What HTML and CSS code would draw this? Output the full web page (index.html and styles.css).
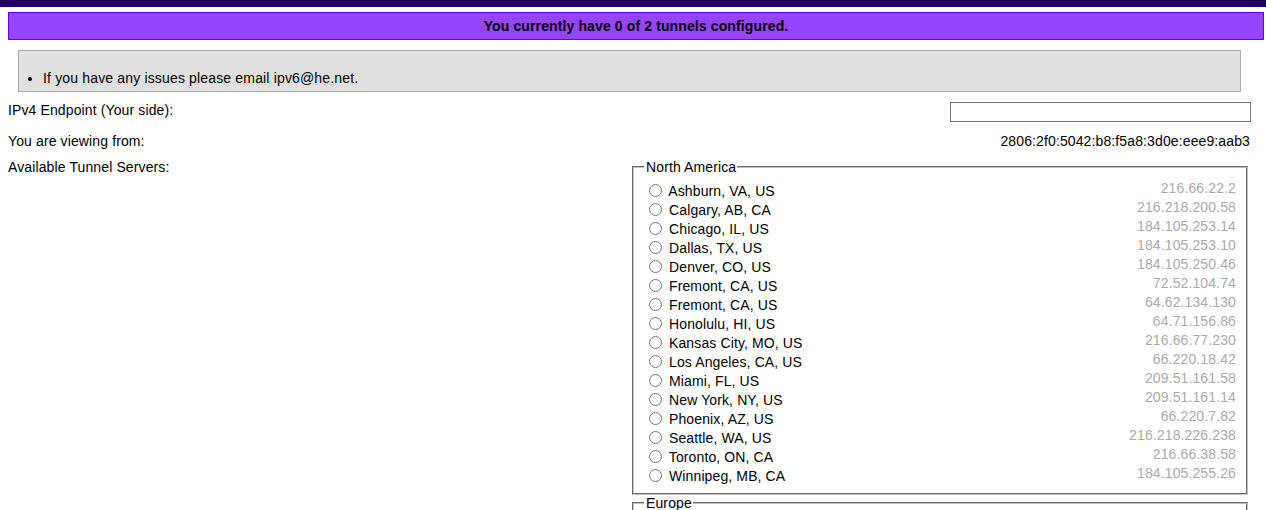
FILE: index.html
```html
<!DOCTYPE html>
<html>
<head>
<meta charset="utf-8">
<title>Create Regular Tunnel</title>
<link rel="stylesheet" href="styles.css">
</head>
<body>
<div class="topbar"></div>
<div class="banner">You currently have 0 of 2 tunnels configured.</div>
<div class="notice">
  <ul>
    <li>If you have any issues please email ipv6@he.net.</li>
  </ul>
</div>
<div class="main">
  <div class="row row-endpoint">
    <span class="label">IPv4 Endpoint (Your side):</span>
    <input class="endpoint" type="text">
  </div>
  <div class="row row-from">
    <span class="label">You are viewing from:</span>
    <span class="value">2806:2f0:5042:b8:f5a8:3d0e:eee9:aab3</span>
  </div>
  <div class="row row-servers">
    <span class="label">Available Tunnel Servers:</span>
    <div class="servers">
      <fieldset class="region">
        <legend>North America</legend>
        <div class="srv"><label><input type="radio" name="srv"> Ashburn, VA, US</label><span class="ip">216.66.22.2</span></div>
        <div class="srv"><label><input type="radio" name="srv"> Calgary, AB, CA</label><span class="ip">216.218.200.58</span></div>
        <div class="srv"><label><input type="radio" name="srv"> Chicago, IL, US</label><span class="ip">184.105.253.14</span></div>
        <div class="srv"><label><input type="radio" name="srv"> Dallas, TX, US</label><span class="ip">184.105.253.10</span></div>
        <div class="srv"><label><input type="radio" name="srv"> Denver, CO, US</label><span class="ip">184.105.250.46</span></div>
        <div class="srv"><label><input type="radio" name="srv"> Fremont, CA, US</label><span class="ip">72.52.104.74</span></div>
        <div class="srv"><label><input type="radio" name="srv"> Fremont, CA, US</label><span class="ip">64.62.134.130</span></div>
        <div class="srv"><label><input type="radio" name="srv"> Honolulu, HI, US</label><span class="ip">64.71.156.86</span></div>
        <div class="srv"><label><input type="radio" name="srv"> Kansas City, MO, US</label><span class="ip">216.66.77.230</span></div>
        <div class="srv"><label><input type="radio" name="srv"> Los Angeles, CA, US</label><span class="ip">66.220.18.42</span></div>
        <div class="srv"><label><input type="radio" name="srv"> Miami, FL, US</label><span class="ip">209.51.161.58</span></div>
        <div class="srv"><label><input type="radio" name="srv"> New York, NY, US</label><span class="ip">209.51.161.14</span></div>
        <div class="srv"><label><input type="radio" name="srv"> Phoenix, AZ, US</label><span class="ip">66.220.7.82</span></div>
        <div class="srv"><label><input type="radio" name="srv"> Seattle, WA, US</label><span class="ip">216.218.226.238</span></div>
        <div class="srv"><label><input type="radio" name="srv"> Toronto, ON, CA</label><span class="ip">216.66.38.58</span></div>
        <div class="srv"><label><input type="radio" name="srv"> Winnipeg, MB, CA</label><span class="ip">184.105.255.26</span></div>
      </fieldset>
      <fieldset class="region">
        <legend>Europe</legend>
        <div class="srv"><label><input type="radio" name="srv"> Amsterdam, NL</label><span class="ip">216.66.84.46</span></div>
        <div class="srv"><label><input type="radio" name="srv"> Berlin, DE</label><span class="ip">216.66.86.114</span></div>
        <div class="srv"><label><input type="radio" name="srv"> Budapest, HU</label><span class="ip">216.66.87.14</span></div>
      </fieldset>
    </div>
  </div>
</div>
</body>
</html>
```
FILE: styles.css
```css
html, body {
  margin: 0;
  padding: 0;
  background: #ffffff;
}
body {
  font-family: "Liberation Sans", Arial, sans-serif;
  font-size: 14px;
  letter-spacing: 0.12px;
  color: #000000;
  line-height: 16px;
}
.topbar {
  height: 7px;
  background: #1f0066;
}
.banner {
  margin: 5px 2px 0 8px;
  height: 28px;
  box-sizing: border-box;
  border: 1px solid #6200ee;
  background: #9645ff;
  line-height: 26px;
  text-align: center;
  font-weight: bold;
}
.notice {
  margin: 10px 0 0 18px;
  width: 1223px;
  height: 42px;
  box-sizing: border-box;
  border: 1px solid #aaaaaa;
  background: #e0e0e0;
}
.notice ul {
  margin: 0;
  padding: 19px 0 0 24px;
}
.notice li {
  letter-spacing: 0.16px;
}
.main {
  margin-left: 8px;
  width: 1243px;
}
.row {
  display: flex;
  justify-content: space-between;
  align-items: flex-start;
}
.row-endpoint {
  margin-top: 10px;
}
.endpoint {
  width: 301px;
  height: 20px;
  box-sizing: border-box;
  margin: 0;
  padding: 1px 2px;
  border: 1px solid #767676;
  font: inherit;
}
.row-from {
  margin-top: 11px;
  padding-right: 1px;
}
.row-servers {
  margin-top: 9px;
}
.row-servers > .label {
  padding-top: 1px;
}
.servers {
  width: 620px;
  margin: 1px 1px 0 0;
}
.region {
  margin: 0 2px;
  padding: 6px 10px 8px 10px;
  border: 2px groove #c0c0c0;
  min-width: 0;
}
.region legend {
  padding: 0 1px 0 2px;
}
.srv {
  display: flex;
  justify-content: space-between;
  align-items: flex-start;
  height: 19px;
}
.srv label {
  display: flex;
  align-items: flex-start;
  white-space: pre;
  line-height: 16px;
  padding-top: 2px;
}
.srv label input {
  margin: 1px 3px 0 5px;
  width: 13px;
  height: 13px;
}
.ip {
  color: #aaaaaa;
  line-height: 14px;
}
```
